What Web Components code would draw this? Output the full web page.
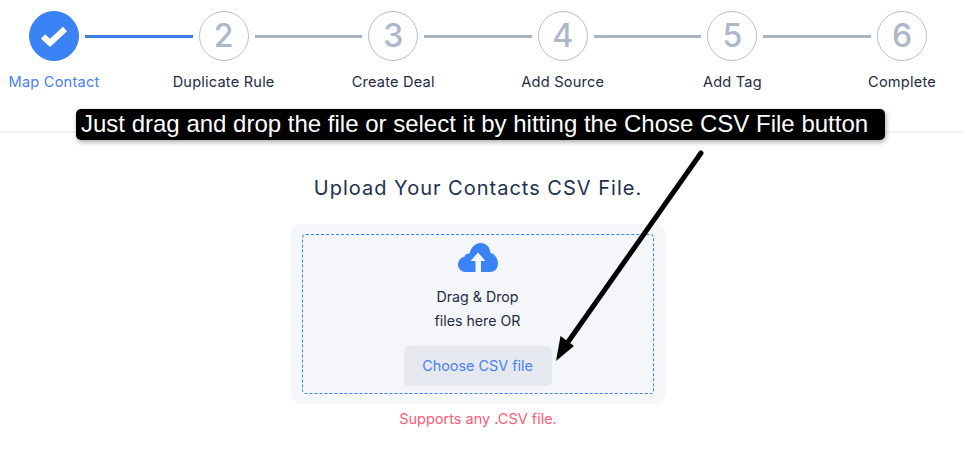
<!DOCTYPE html>
<html>
<head>
<meta charset="utf-8">
<title>Upload contacts</title>
<style>
  html, body { margin: 0; height: 100%; background: #fff; overflow: hidden; }
  body { font-family: Inter, "Noto Sans", sans-serif; position: relative; }
</style>
</head>
<body>
<import-page>
  <step-bar slot="steps">
    <step-item num="1" done>Map Contact</step-item>
    <step-line done></step-line>
    <step-item num="2">Duplicate Rule</step-item>
    <step-line></step-line>
    <step-item num="3">Create Deal</step-item>
    <step-line></step-line>
    <step-item num="4">Add Source</step-item>
    <step-line></step-line>
    <step-item num="5">Add Tag</step-item>
    <step-line></step-line>
    <step-item num="6">Complete</step-item>
  </step-bar>
  <upload-box></upload-box>
</import-page>
<hint-overlay>Just drag and drop the file or select it by hitting the Chose CSV File button</hint-overlay>

<script>
class ImportPage extends HTMLElement {
  connectedCallback() {
    this.attachShadow({ mode: 'open' });
    this.shadowRoot.innerHTML = `
      <style>
        :host { display: block; }
        .top { height: 131px; border-bottom: 2px solid #f1f1f6; box-sizing: content-box; }
      </style>
      <div class="top"><slot name="steps"></slot></div>
      <slot></slot>
    `;
  }
}

class StepBar extends HTMLElement {
  connectedCallback() {
    this.attachShadow({ mode: 'open' });
    this.shadowRoot.innerHTML = `
      <style>
        :host { display: flex; align-items: flex-start; padding: 11px 0 0 29px; }
      </style>
      <slot></slot>
    `;
  }
}

class StepItem extends HTMLElement {
  connectedCallback() {
    const done = this.hasAttribute('done');
    const check = `<svg width="30" height="26" viewBox="0 0 30 26"><path d="M4 13.500L11 20L26 6" fill="none" stroke="#fff" stroke-width="6"/></svg>`;
    this.attachShadow({ mode: 'open' });
    this.shadowRoot.innerHTML = `
      <style>
        :host { display: flex; flex-direction: column; align-items: center; width: 50px; flex: none; }
        .dot {
          width: 50px; height: 50px; box-sizing: border-box; border-radius: 50%;
          border: 1px solid #b6bece; display: flex; align-items: center; justify-content: center;
          font-size: 32px; font-weight: 500; color: #adb7c9; line-height: 1;
        }
        :host([done]) .dot { background: #3b82f6; border-color: #3b82f6; }
        .label {
          margin-top: 12px; white-space: nowrap; font-size: 14.6px; line-height: 18px;
          color: #1f2a44; letter-spacing: 0.2px;
        }
        :host([done]) .label { color: #4a80f5; }
      </style>
      <div class="dot">${done ? check : this.getAttribute('num')}</div>
      <div class="label"><slot></slot></div>
    `;
  }
}

class StepLine extends HTMLElement {
  connectedCallback() {
    this.attachShadow({ mode: 'open' });
    this.shadowRoot.innerHTML = `
      <style>
        :host { display: block; flex: none; width: 107.6px; height: 3px; margin: 24px 6px 0; background: #abb2c0; }
        :host([done]) { background: #3b7de8; }
      </style>
    `;
  }
}

class UploadBox extends HTMLElement {
  connectedCallback() {
    this.attachShadow({ mode: 'open' });
    this.shadowRoot.innerHTML = `
      <style>
        :host { display: flex; flex-direction: column; align-items: center; padding-right: 7px; }
        h2 {
          margin: 41px 0 22px; font-size: 20px; line-height: 28px; font-weight: 400;
          letter-spacing: 1px; color: #1e3050; white-space: nowrap;
        }
        .card { width: 375px; height: 180px; box-sizing: border-box; padding: 10px 12px 10px 11px; background: #f5f6fa; border-radius: 10px; }
        .drop {
          height: 160px; box-sizing: border-box; border: 1px dashed #3b82f6; border-radius: 4px;
          display: flex; flex-direction: column; align-items: center; padding-top: 7px;
        }
        svg { display: block; }
        p { margin: 13px 0 13px; font-size: 14.2px; line-height: 24px; color: #1f2a44; text-align: center; }
        button {
          width: 148px; height: 40px; border: 0; border-radius: 5px; background: #e6e8ef;
          font: inherit; font-size: 14.4px; color: #4a80f5; padding: 0 0 1px;
        }
        .note { margin-top: 5px; font-size: 14.5px; line-height: 20px; color: #ff5a78; }
      </style>
      <h2>Upload Your Contacts CSV File.</h2>
      <div class="card">
        <div class="drop">
          <svg width="42" height="30" viewBox="0 0 42 30">
            <path fill="#3b82f6" d="M9 30C4 30 1 26.400 1 22.500C1 18.500 3.800 15.500 7.500 14.800C8 12.500 10 11 12.500 11.500C14 5 19 1 23.500 1C29 1 33 5 33.500 11C38 12 41 16.500 41 21.500C41 26.500 37.500 30 33 30Z"/>
            <path fill="#f5f6fa" d="M21 10.500L28.500 19H24V30H18.500V19H13.500Z"/>
          </svg>
          <p>Drag &amp; Drop<br>files here OR</p>
          <button>Choose CSV file</button>
        </div>
      </div>
      <div class="note">Supports any .CSV file.</div>
    `;
  }
}

class HintOverlay extends HTMLElement {
  connectedCallback() {
    this.attachShadow({ mode: 'open' });
    this.shadowRoot.innerHTML = `
      <style>
        :host { display: block; position: absolute; left: 0; top: 0; width: 963px; height: 461px; pointer-events: none; }
        .tip {
          position: absolute; left: 76px; top: 109px; width: 809px; height: 31px;
          box-sizing: border-box; padding-left: 5px; background: #000; color: #fff; border-radius: 5px;
          box-shadow: 1px 2px 5px rgba(0,0,0,.35);
          font: 24px/30px "Liberation Sans", Arial, sans-serif; white-space: nowrap;
        }
        svg { position: absolute; left: 0; top: 0; }
      </style>
      <div class="tip"><slot></slot></div>
      <svg width="963" height="461" viewBox="0 0 963 461">
        <path d="M701 153L568 342" stroke="#000" stroke-width="5" stroke-linecap="round" fill="none"/>
        <path d="M556 361L560.500 336L574 346Z" fill="#000"/>
      </svg>
    `;
  }
}

customElements.define('import-page', ImportPage);
customElements.define('step-bar', StepBar);
customElements.define('step-item', StepItem);
customElements.define('step-line', StepLine);
customElements.define('upload-box', UploadBox);
customElements.define('hint-overlay', HintOverlay);
</script>
</body>
</html>
